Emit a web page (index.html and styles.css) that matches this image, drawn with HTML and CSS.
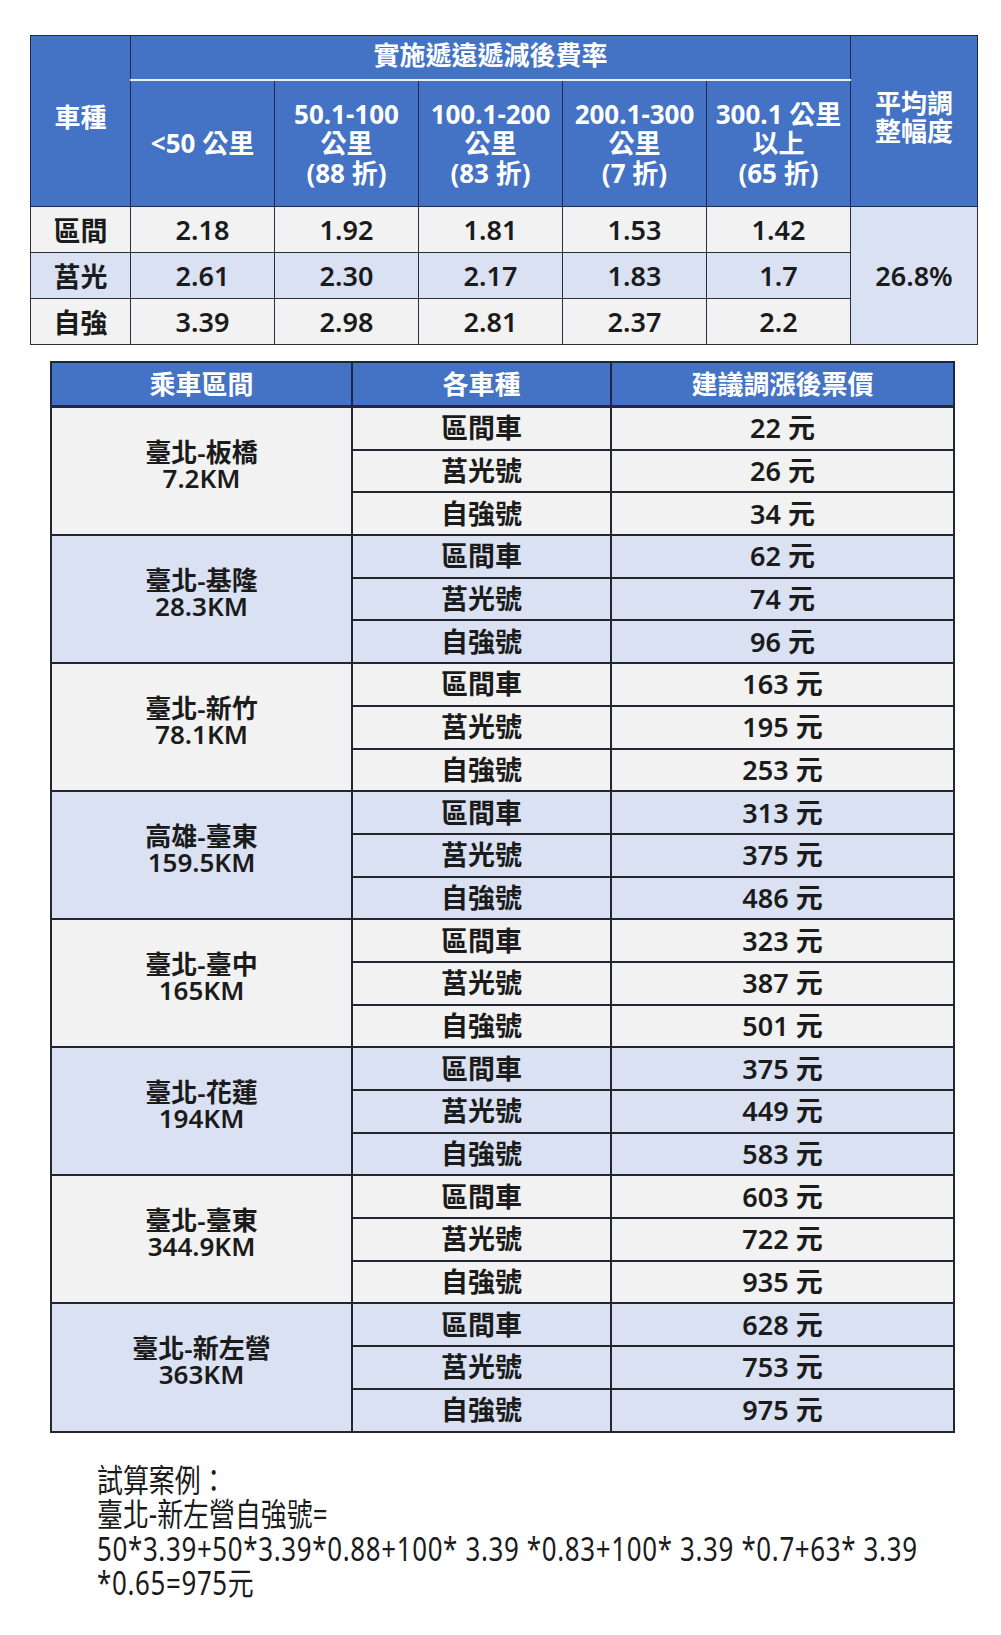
FILE: index.html
```html
<!DOCTYPE html>
<html lang="zh-Hant">
<head>
<meta charset="utf-8">
<title>票價</title>
<link rel="stylesheet" href="styles.css">
</head>
<body>
<div class="page">
  <table class="rate">
    <colgroup>
      <col class="c-type"><col class="c-d"><col class="c-d"><col class="c-d"><col class="c-d"><col class="c-d"><col class="c-avg">
    </colgroup>
    <thead>
      <tr class="h1">
        <th rowspan="2" class="type-h">車種</th>
        <th colspan="5" class="span-title">實施遞遠遞減後費率</th>
        <th rowspan="2" class="avg-h">平均調<br>整幅度</th>
      </tr>
      <tr class="h2">
        <th>&lt;50 公里</th>
        <th>50.1-100<br>公里<br>(88 折)</th>
        <th>100.1-200<br>公里<br>(83 折)</th>
        <th>200.1-300<br>公里<br>(7 折)</th>
        <th>300.1 公里<br>以上<br>(65 折)</th>
      </tr>
    </thead>
    <tbody>
      <tr class="gray">
        <td>區間</td><td>2.18</td><td>1.92</td><td>1.81</td><td>1.53</td><td>1.42</td>
        <td rowspan="3" class="avg">26.8%</td>
      </tr>
      <tr class="blue">
        <td>莒光</td><td>2.61</td><td>2.30</td><td>2.17</td><td>1.83</td><td>1.7</td>
      </tr>
      <tr class="gray">
        <td>自強</td><td>3.39</td><td>2.98</td><td>2.81</td><td>2.37</td><td>2.2</td>
      </tr>
    </tbody>
  </table>

  <table class="fare">
    <colgroup><col class="f1"><col class="f2"><col class="f3"></colgroup>
    <thead>
      <tr><th>乘車區間</th><th>各車種</th><th>建議調漲後票價</th></tr>
    </thead>
    <tbody class="gray">
      <tr><td rowspan="3" class="route">臺北-板橋<br>7.2KM</td><td>區間車</td><td>22 元</td></tr>
      <tr><td>莒光號</td><td>26 元</td></tr>
      <tr><td>自強號</td><td>34 元</td></tr>
    </tbody>
    <tbody class="blue">
      <tr><td rowspan="3" class="route">臺北-基隆<br>28.3KM</td><td>區間車</td><td>62 元</td></tr>
      <tr><td>莒光號</td><td>74 元</td></tr>
      <tr><td>自強號</td><td>96 元</td></tr>
    </tbody>
    <tbody class="gray">
      <tr><td rowspan="3" class="route">臺北-新竹<br>78.1KM</td><td>區間車</td><td>163 元</td></tr>
      <tr><td>莒光號</td><td>195 元</td></tr>
      <tr><td>自強號</td><td>253 元</td></tr>
    </tbody>
    <tbody class="blue">
      <tr><td rowspan="3" class="route">高雄-臺東<br>159.5KM</td><td>區間車</td><td>313 元</td></tr>
      <tr><td>莒光號</td><td>375 元</td></tr>
      <tr><td>自強號</td><td>486 元</td></tr>
    </tbody>
    <tbody class="gray">
      <tr><td rowspan="3" class="route">臺北-臺中<br>165KM</td><td>區間車</td><td>323 元</td></tr>
      <tr><td>莒光號</td><td>387 元</td></tr>
      <tr><td>自強號</td><td>501 元</td></tr>
    </tbody>
    <tbody class="blue">
      <tr><td rowspan="3" class="route">臺北-花蓮<br>194KM</td><td>區間車</td><td>375 元</td></tr>
      <tr><td>莒光號</td><td>449 元</td></tr>
      <tr><td>自強號</td><td>583 元</td></tr>
    </tbody>
    <tbody class="gray">
      <tr><td rowspan="3" class="route">臺北-臺東<br>344.9KM</td><td>區間車</td><td>603 元</td></tr>
      <tr><td>莒光號</td><td>722 元</td></tr>
      <tr><td>自強號</td><td>935 元</td></tr>
    </tbody>
    <tbody class="blue">
      <tr><td rowspan="3" class="route">臺北-新左營<br>363KM</td><td>區間車</td><td>628 元</td></tr>
      <tr><td>莒光號</td><td>753 元</td></tr>
      <tr><td>自強號</td><td>975 元</td></tr>
    </tbody>
  </table>

  <div class="note">
    <p>試算案例：</p>
    <p>臺北-新左營自強號=</p>
    <p class="formula">50*3.39+50*3.39*0.88+100* 3.39 *0.83+100* 3.39 *0.7+63* 3.39</p>
    <p class="formula">*0.65=975元</p>
  </div>
</div>
</body>
</html>
```

FILE: styles.css
```css
html, body {
  margin: 0;
  padding: 0;
  background: #ffffff;
}

.page {
  padding: 35px 0 0 0;
  font-family: "Noto Sans", "Noto Sans CJK TC", sans-serif;
  color: #1b1b1b;
}

table {
  border-collapse: collapse;
  table-layout: fixed;
}

/* ---------- top rate table ---------- */
.rate {
  margin-left: 30px;
  width: 947px;
  border: 1px solid #2a2f3a;
}
.rate .c-type { width: 100px; }
.rate .c-d { width: 144px; }
.rate .c-avg { width: 127px; }

.rate th {
  background: #4472c4;
  color: #ffffff;
  font-weight: 700;
  font-size: 26px;
  line-height: 29.5px;
  border: 1px solid #1d2b4a;
  padding: 0;
  text-align: center;
  vertical-align: middle;
}
.rate .h1 th { height: 40px; }
.rate .h1 .span-title {
  border-bottom: 2px solid #e9eef8;
  padding-bottom: 3px;
}
.rate .h2 th {
  height: 124px;
  padding-top: 1px;
}
.rate .type-h {
  padding-bottom: 6px;
}
.rate .avg-h {
  line-height: 28px;
  padding-bottom: 8px;
}
.rate td {
  height: 45px;
  font-size: 27px;
  font-weight: 600;
  text-align: center;
  vertical-align: middle;
  border: 1px solid #2a2f3a;
  padding: 0;
}
.rate .gray td { background: #f2f2f2; }
.rate .blue td { background: #d9e1f2; }
.rate td.avg { background: #d9e1f2; }

/* ---------- fare table ---------- */
.fare {
  margin-top: 16px;
  margin-left: 50px;
  width: 903px;
  border: 2px solid #22262e;
}
.fare .f1 { width: 301px; }
.fare .f2 { width: 259px; }
.fare .f3 { width: 343px; }

.fare th {
  background: #4472c4;
  color: #ffffff;
  font-weight: 700;
  font-size: 26px;
  height: 40px;
  padding: 0 0 2px 0;
  border: 2px solid #1d2740;
  border-bottom: 3px solid #1f2a44;
  text-align: center;
  vertical-align: middle;
}
.fare td {
  height: 40.7px;
  padding: 0;
  font-size: 27px;
  font-weight: 600;
  line-height: 30px;
  text-align: center;
  vertical-align: middle;
  border: 2px solid #22262e;
}
.fare td.route {
  font-size: 26px;
  line-height: 26px;
  padding-bottom: 12px;
}
.fare tbody.gray td { background: #f2f2f2; }
.fare tbody.blue td { background: #d9e1f2; }

/* ---------- note ---------- */
.note {
  margin: 30px 0 0 97px;
  font-family: "Noto Sans", "Noto Sans CJK TC", sans-serif;
  font-size: 32px;
  line-height: 34.5px;
  color: #1b1b1b;
  transform: scaleX(0.81);
  transform-origin: left top;
}
.note p {
  margin: 0;
  white-space: nowrap;
}
.note .formula {
  letter-spacing: 0.8px;
}
```
